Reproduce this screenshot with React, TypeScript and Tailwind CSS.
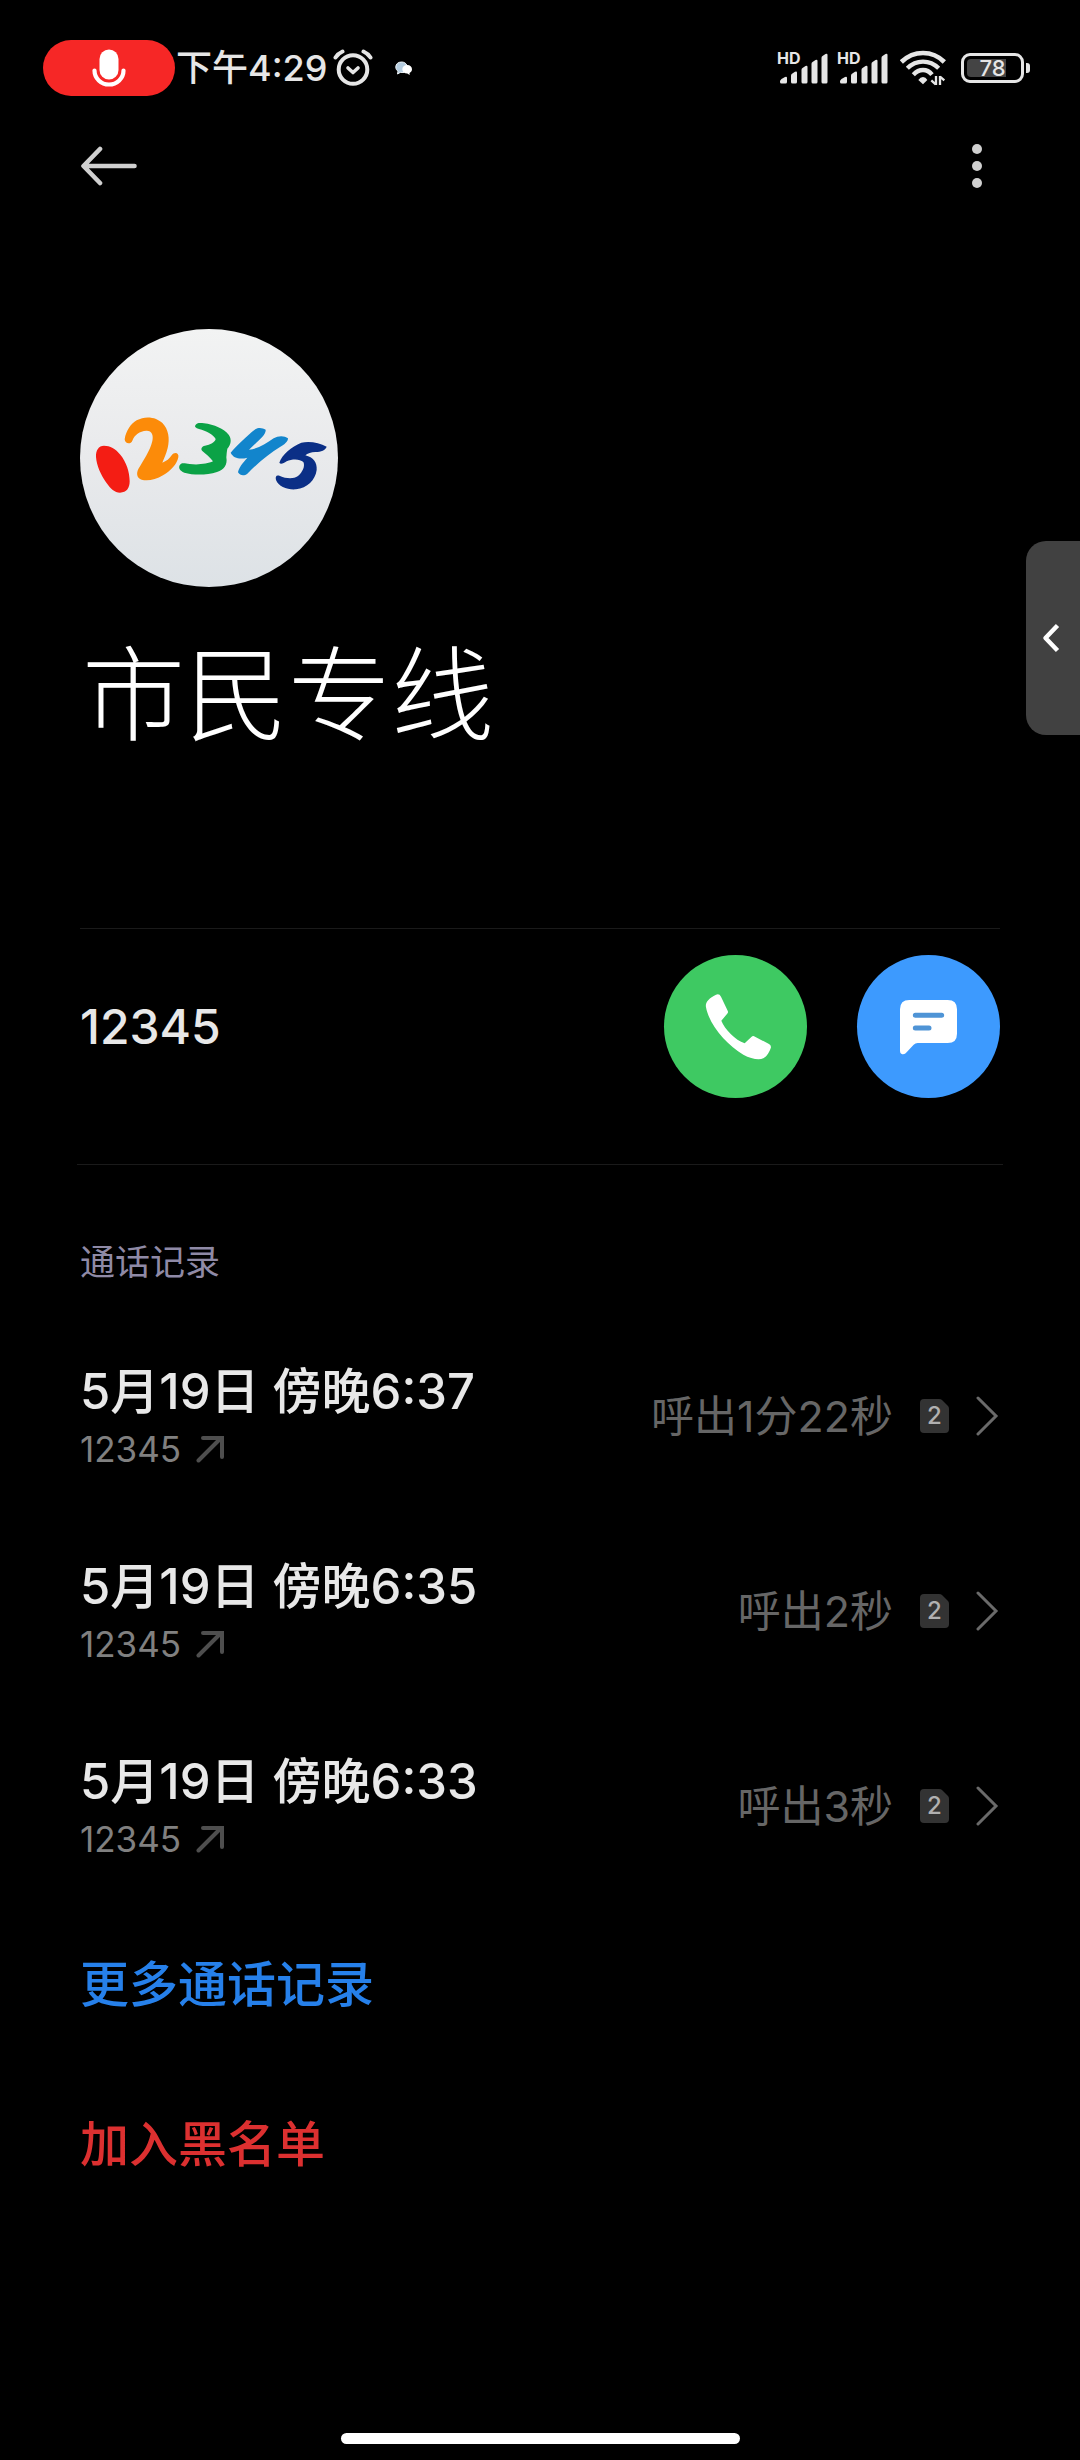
import React from "react";

type CallRecord = {
  id: number;
  time: string;
  number: string;
  duration: string;
  sim: number;
};

const calls: CallRecord[] = [
  { id: 1, time: "5月19日 傍晚6:37", number: "12345", duration: "呼出1分22秒", sim: 2 },
  { id: 2, time: "5月19日 傍晚6:35", number: "12345", duration: "呼出2秒", sim: 2 },
  { id: 3, time: "5月19日 傍晚6:33", number: "12345", duration: "呼出3秒", sim: 2 },
];

function MicIcon() {
  return (
    <svg viewBox="0 0 34 38" className="h-[38px] w-[34px]" aria-hidden="true">
      <rect x="7.500" y="0.500" width="19" height="30" rx="9.500" fill="#fff" />
      <path d="M2.500 21.500a14.500 14 0 0 0 29 0" fill="none" stroke="#fff" strokeWidth="4.200" strokeLinecap="round" />
    </svg>
  );
}

function AlarmIcon() {
  return (
    <svg
      viewBox="0 0 40 38"
      className="h-[38px] w-[40px]"
      fill="none"
      stroke="#e6e6e6"
      strokeLinecap="round"
      aria-hidden="true"
    >
      <circle cx="20" cy="20.500" r="14.300" strokeWidth="4" />
      <path d="M2.500 8.500Q5 4.500 9.500 2.500M37.500 8.500Q35 4.500 30.500 2.500" strokeWidth="4" />
      <path d="M15 19l5 4.500 5-4.500" strokeWidth="3.600" strokeLinejoin="round" />
    </svg>
  );
}

function ChatNoticeIcon() {
  return (
    <svg viewBox="0 0 18 15" className="h-[15px] w-[18px]" aria-hidden="true">
      <path d="M6.500 1C3 1 .8 3.200.8 6c0 2 .9 3.300 2.200 4.200L2.500 13l2.800-1.600 4 .1L12 4.500C11 2 9 1 6.500 1z" fill="#b5cde0" stroke="#eef4f8" />
      <path d="M12.300 4c-3 0-5 1.900-5 4.300 0 2.500 2 4.300 5 4.300l2.400 1.400-.2-1.900c1.500-.8 2.500-2 2.500-3.800C17 5.900 15 4 12.300 4z" fill="#fff" />
    </svg>
  );
}

function SignalIcon({ label }: { label: string }) {
  return (
    <div className="relative h-[34px] w-[51px]" role="img" aria-label={label}>
      <span className="absolute left-0 top-0 text-[16px] font-bold leading-[14px] text-[#e6e6e6]">HD</span>
      <svg viewBox="0 0 51 34" className="h-[34px] w-[51px]" fill="#e6e6e6" aria-hidden="true">
        <path d="M3 30.500 Q3 29 4.500 28L8 26q2-.8 2 1V31q0 1.500-1.500 1.500h-4Q3 32.500 3 31z" />
        <path d="M14 24.500q0-1 1-1.700l3-2q2-1 2 1V31q0 1.500-1.500 1.500h-3Q14 32.500 14 31z" />
        <path d="M24.500 19q0-1.200 1-1.900l3-2q2-1 2 1V31q0 1.500-1.500 1.500h-3q-1.500 0-1.500-1.500z" />
        <path d="M34.500 13q0-1.200 1-1.900l3-2q2-1 2 1V31q0 1.500-1.500 1.500h-3q-1.500 0-1.500-1.500z" />
        <path d="M44.500 7q0-1.200 1-1.900l3-2q2-1 2 1V31q0 1.500-1.500 1.500h-3q-1.500 0-1.500-1.500z" />
      </svg>
    </div>
  );
}

function WifiIcon() {
  return (
    <svg viewBox="480 93 138 108" className="h-[36px] w-[46px]" fill="none" stroke="#e6e6e6" role="img" aria-label="WLAN">
      <path d="M484 129Q512 102 549 102T613 129" strokeWidth="14" />
      <path d="M502 148Q522 128 549 128T596 148" strokeWidth="13" />
      <path d="M520 167Q533 153 549 153T576 167" strokeWidth="13" />
      <path d="M535 183Q541 174 549 174T562 183L549 196z" fill="#e6e6e6" stroke="none" />
      <path d="M588 171v27M574 184l13 12M600 198v-27M613 184l-13-11" strokeWidth="7" />
    </svg>
  );
}

function Battery() {
  return (
    <div className="flex items-center gap-[2px]" role="img" aria-label="电量 78">
      <div className="relative flex h-[30px] w-[63px] items-center rounded-[9px] border-[3px] border-[#e6e6e6] p-[3px]">
        <div className="h-full w-[39px] rounded-l-[4px] bg-[#444]" />
        <span className="absolute inset-0 flex items-center justify-center text-[22px] font-medium leading-none text-[#e6e6e6]">
          78
        </span>
      </div>
      <div className="h-[10px] w-[4px] rounded-r-[3px] bg-[#e6e6e6]" />
    </div>
  );
}

function StatusBar() {
  return (
    <div className="flex items-center pl-[43px] pr-[50px] pt-10">
      <div className="flex h-[56px] w-[132px] items-center justify-center rounded-full bg-[#f62726]">
        <MicIcon />
      </div>
      <span className="ml-px text-[36px] font-medium leading-[44px] text-[#e6e6e6]">下午4:29</span>
      <div className="ml-[6px]">
        <AlarmIcon />
      </div>
      <div className="ml-[22px]">
        <ChatNoticeIcon />
      </div>
      <div className="ml-auto flex items-center">
        <SignalIcon label="SIM 1" />
        <div className="ml-[9px]">
          <SignalIcon label="SIM 2" />
        </div>
        <div className="ml-[12px]">
          <WifiIcon />
        </div>
        <div className="ml-[15px]">
          <Battery />
        </div>
      </div>
    </div>
  );
}

function AppBar() {
  return (
    <header className="flex h-[140px] items-center justify-between px-20">
      <button type="button" aria-label="返回">
        <svg viewBox="0 0 58 40" className="h-[40px] w-[58px]" fill="none" stroke="#d0d0d0" strokeWidth="4.600" strokeLinecap="round" strokeLinejoin="round" aria-hidden="true">
          <path d="M54.500 20H4M20 3L3.500 20 20 37" />
        </svg>
      </button>
      <button type="button" aria-label="更多选项" className="flex w-[46px] flex-col items-center gap-[7px]">
        <span className="size-[10px] rounded-full bg-[#d0d0d0]" />
        <span className="size-[10px] rounded-full bg-[#d0d0d0]" />
        <span className="size-[10px] rounded-full bg-[#d0d0d0]" />
      </button>
    </header>
  );
}

function Avatar() {
  return (
    <div className="size-[258px] overflow-hidden rounded-full bg-linear-to-b from-[#f2f3f3] via-[#e9eaec] to-[#dde2e6]">
      <svg viewBox="60 57 774 774" className="size-full" role="img" aria-label="12345">
        <path d="M132 407c-16 0-25 14-24 34 2 26 14 52 30 76 14 20 26 31 42 31 20 0 29-14 29-34 0-28-10-58-28-80-14-18-31-27-49-27z" fill="#f41d14" />
        <path
          d="M194 388c4-26 18-46 36-57 26-15 60-10 78 9 17 18 22 46 15 74-4 18-12 34-16 44 12-4 22-12 28-22 8-12 23-8 20 6-4 20-22 40-46 54-22 13-46 18-64 13-14-4-17-18-10-32 14-24 36-56 42-84 4-18-2-32-18-31-20 1-36 13-42 30-5 12-22 10-23-4z"
          fill="#fc8b09"
        />
        <path
          d="M406 346c4-8 14-8 26-6 30 4 60 16 74 34 10 14 7 30-4 42-2 10-2 18-3 26 4 22-6 38-28 44-32 10-70 10-98 2-14-5-18-14-14-22 4-10 16-6 30-4 24 3 54 0 70-8-10-14-22-22-32-31-6-6-2-14 8-16 16-3 30-10 32-20-8-14-28-24-50-30-10-3-14-6-11-11z"
          fill="#0ba246"
        />
        <path
          d="M512 428c20-22 48-50 74-70 10-7 22-4 31 1 2 16-24 34-50 60 26-2 50-18 74-34 14-8 32-8 43 0 0 10-10 18-24 26-30 18-62 44-98 80-10 8-22 6-28-4 2-14 14-28 28-44-22 6-42 2-50-15z"
          fill="#1285cc"
        />
        <path
          d="M658 458c8-24 36-48 66-60 24-6 54 0 76 12-4 10-16 16-34 16-12 0-24 4-30 10 24 6 36 22 34 44-4 30-28 54-62 58-26 2-52-8-60-28-3-12 2-16 12-12 18 8 40 10 54 0 14-12 22-30 16-42-10-10-34-10-50-2-10 6-18 10-22 4z"
          fill="#0b2f86"
        />
      </svg>
    </div>
  );
}

function PhoneButton() {
  return (
    <button type="button" aria-label="拨打电话" className="size-[143px] rounded-full bg-[#3ec962]">
      <svg viewBox="12 15 429 429" className="size-full" fill="#fff" aria-hidden="true">
        <path d="M168 134q10-4 15 6l20 42q3 6-2 10l-17 20c10 26 42 58 70 68l20-19q5-5 11-1l42 22q8 5 5 13c-6 16-12 25-22 30-14 6-38 1-60-11C200 285 148 225 138 172c-3-14 8-28 30-38z" />
      </svg>
    </button>
  );
}

function MessageButton() {
  return (
    <button type="button" aria-label="发送短信" className="size-[143px] rounded-full bg-[#3d9afe]">
      <svg viewBox="591 15 429 429" className="size-full" aria-hidden="true">
        <path
          d="M748 150h115q28 0 28 28v73q0 28-28 28h-90q-7 0-12 5l-24 26q-6 4-12 2-5-2-5-9V178q0-28 28-28z"
          fill="#fff"
        />
        <path d="M766 196h79M766 234h41" stroke="#4f94d6" strokeWidth="15" strokeLinecap="round" />
      </svg>
    </button>
  );
}

function SimBadge({ slot }: { slot: number }) {
  return (
    <span className="relative flex h-[34px] w-[29px] items-center justify-center">
      <svg viewBox="0 0 29 34" className="absolute inset-0 size-full" aria-hidden="true">
        <path d="M4 0h15q2 0 3 1l6 6q1 1 1 3v20q0 4-4 4H4q-4 0-4-4V4q0-4 4-4z" fill="#333" />
      </svg>
      <span className="relative text-[24px] font-medium leading-none text-[#b0b0b0]">{slot}</span>
    </span>
  );
}

function CallRow({ call }: { call: CallRecord }) {
  return (
    <li>
      <button type="button" className="flex h-[195px] w-full items-center justify-between text-left">
        <span className="flex flex-col pt-1.5">
          <span className="text-[49px] font-medium leading-[60px] text-[#e8e8e8]">{call.time}</span>
          <span className="flex items-center gap-[15px]">
            <span className="text-[35px] leading-[54px] text-[#808080]">{call.number}</span>
            <svg viewBox="0 0 28 28" className="size-[28px]" fill="none" stroke="#4e4e4e" strokeWidth="4" strokeLinecap="round" aria-hidden="true">
              <path d="M2.500 25.500L25 3M7 3h19v19" />
            </svg>
          </span>
        </span>
        <span className="flex items-center">
          <span className="text-[43px] leading-[60px] text-[#666]">{call.duration}</span>
          <span className="ml-[27px]">
            <SimBadge slot={call.sim} />
          </span>
          <svg viewBox="0 0 24 42" className="ml-[27px] h-[42px] w-[24px]" fill="none" stroke="#6a6a6a" strokeWidth="3" strokeLinecap="round" aria-hidden="true">
            <path d="M2 3l18 18L2 39" />
          </svg>
        </span>
      </button>
    </li>
  );
}

export default function App() {
  return (
    <div className="relative flex min-h-screen flex-col bg-black font-['Inter','Noto_Sans_CJK_SC',sans-serif] text-white">
      <StatusBar />
      <AppBar />

      <main className="px-20 pt-[93px]">
        <Avatar />
        <h1 className="mt-[49px] pl-[2px] text-[103px] font-light leading-[120px]">市民专线</h1>

        <section className="mt-[172px] flex items-center justify-between border-t border-[#1a1a1a] pb-[66px] pt-[26px]">
          <span className="text-[48px] font-medium leading-[60px] text-[#e8e8e8]">12345</span>
          <div className="flex gap-[50px]">
            <PhoneButton />
            <MessageButton />
          </div>
        </section>
        <hr className="-mx-[3px] border-[#1a1a1a]" />

        <section>
          <h2 className="mt-[73px] text-[35px] leading-[48px] text-[#8f8aa6]">通话记录</h2>
          <ul className="mt-[32px]">
            {calls.map((call) => (
              <CallRow key={call.id} call={call} />
            ))}
          </ul>
        </section>

        <div className="mt-[52px] flex flex-col items-start gap-[100px]">
          <button type="button" className="text-[49px] font-medium leading-[60px] text-[#2680ea]">
            更多通话记录
          </button>
          <button type="button" className="text-[49px] font-medium leading-[60px] text-[#dc3030]">
            加入黑名单
          </button>
        </div>
      </main>

      <button
        type="button"
        aria-label="展开侧边栏"
        className="absolute right-0 top-[541px] flex h-[194px] w-[54px] items-center justify-center rounded-l-[20px] bg-[#414141]"
      >
        <svg viewBox="0 0 18 30" className="mr-1 h-[30px] w-[18px]" fill="none" stroke="#fff" strokeWidth="4.500" strokeLinejoin="round" aria-hidden="true">
          <path d="M15.500 2.500L3.500 15l12 12.500" />
        </svg>
      </button>

      <div className="mt-auto flex justify-center pb-4 pt-10">
        <div className="h-[11px] w-[399px] rounded-full bg-white" />
      </div>
    </div>
  );
}
